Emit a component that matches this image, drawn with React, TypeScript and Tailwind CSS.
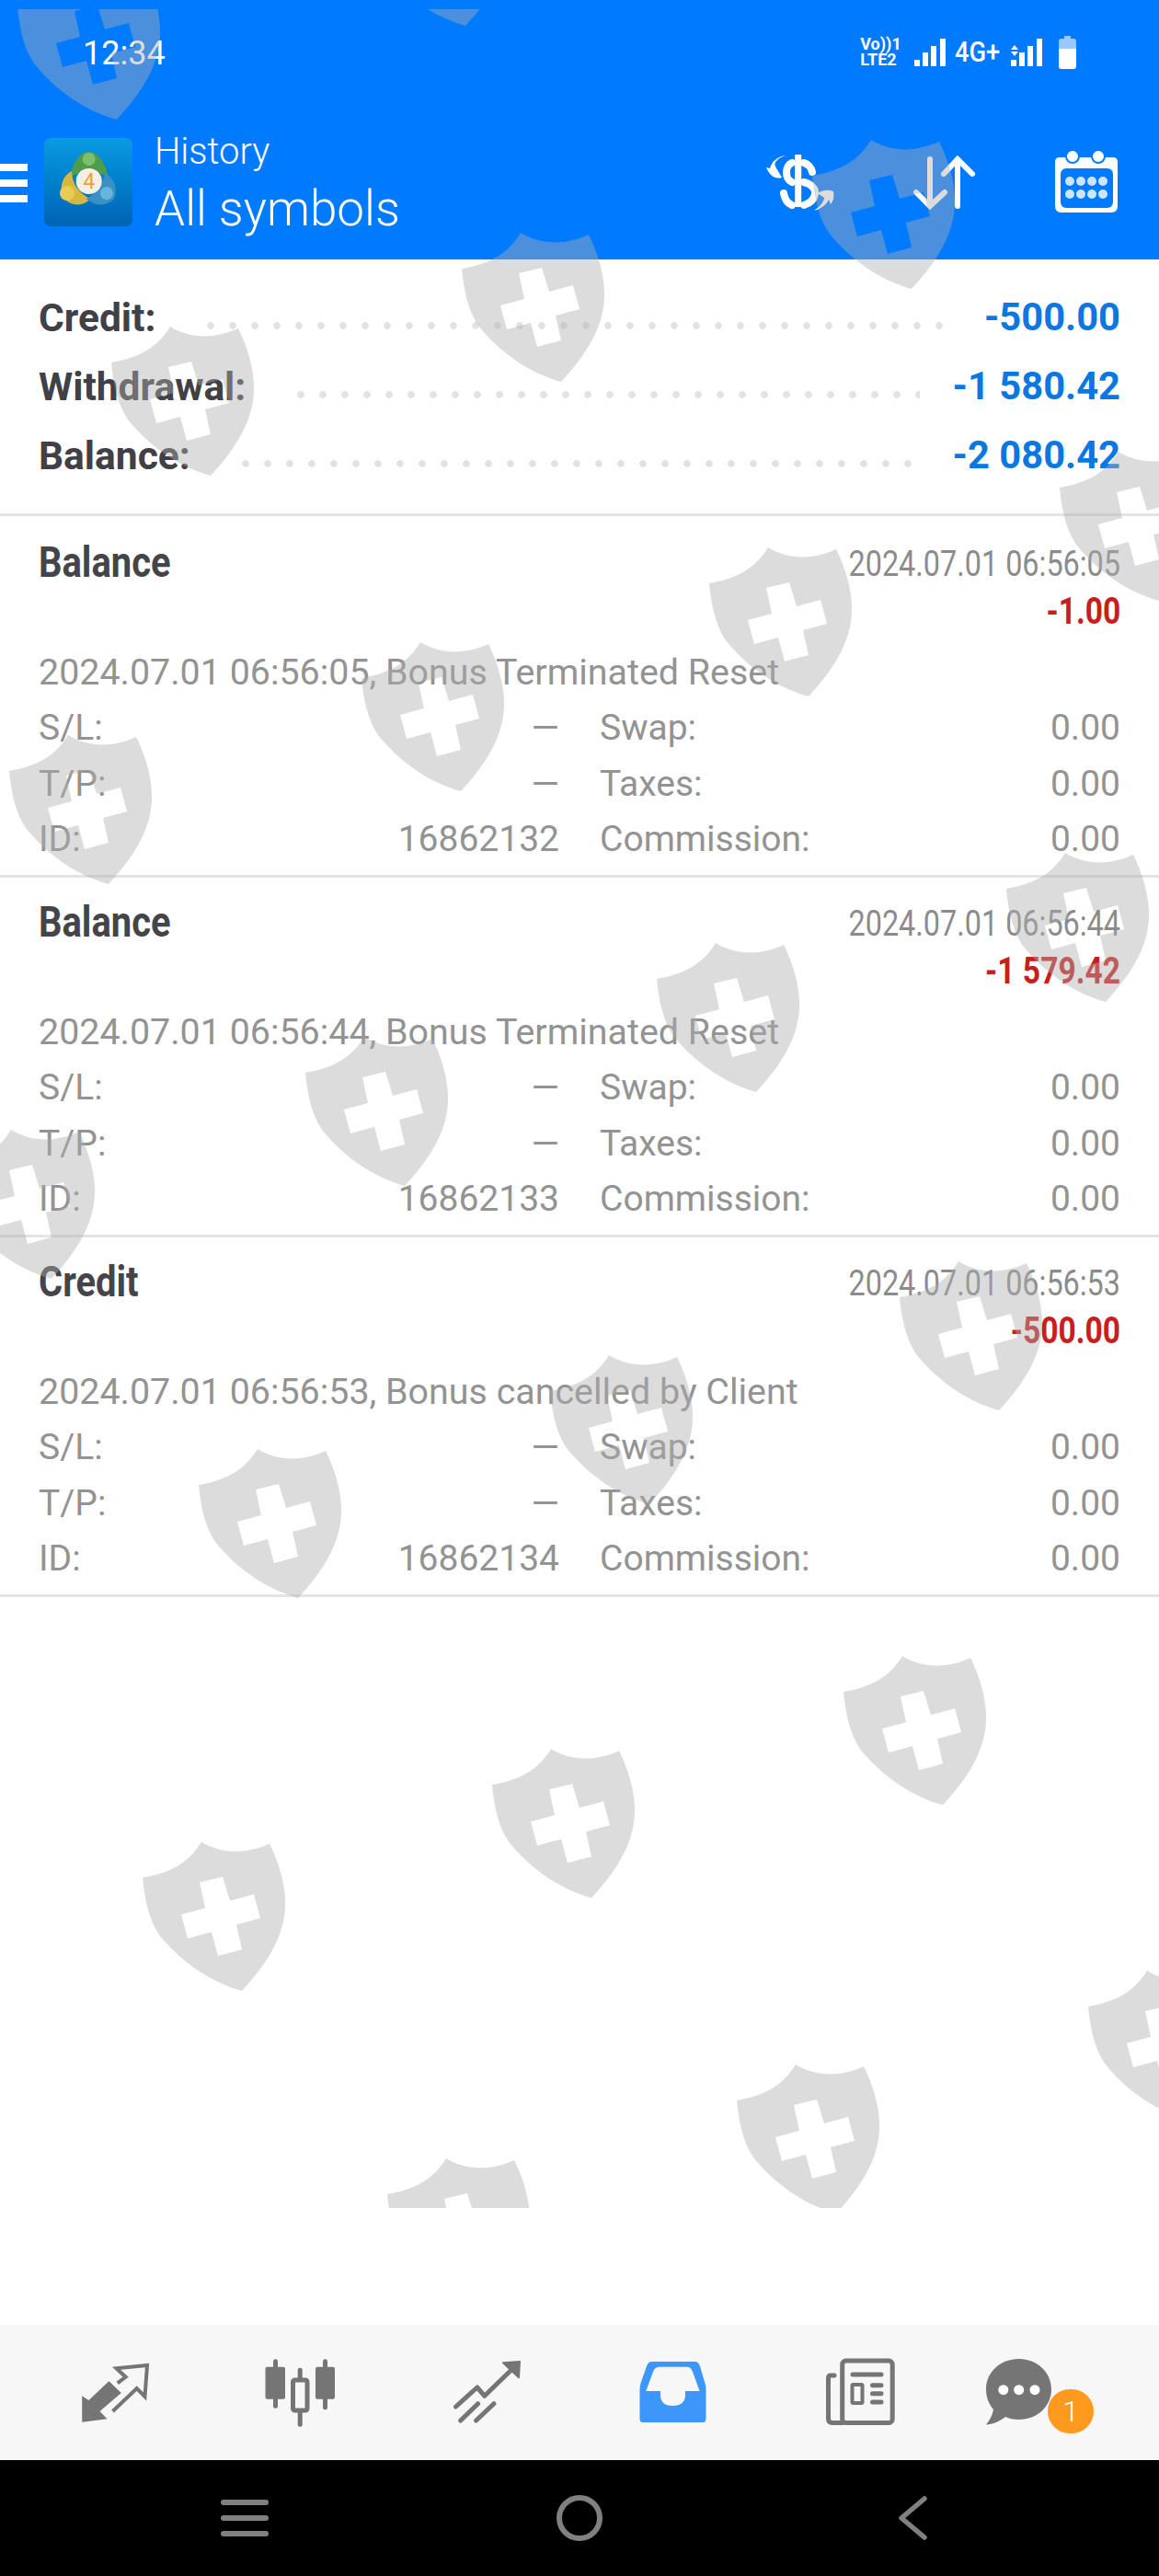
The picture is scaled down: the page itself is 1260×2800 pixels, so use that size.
import React from "react";

const SHIELDS: [number, number][] = [
  [19, -44], [398, -146], [883, 140], [502, 241], [121, 343], [1152, 479], [771, 583], [393, 686], [10, 787],
  [1094, 915], [714, 1013], [332, 1115], [-52, 1216], [978, 1359], [598, 1461], [216, 1563],
  [917, 1788], [535, 1889], [155, 1990], [1183, 2130], [801, 2232], [421, 2334],
];

function Shield({ x, y }: { x: number; y: number }) {
  return (
    <svg className="absolute" width="156" height="166" viewBox="0 0 156 166" style={{ left: x, top: y }}>
      <path
        fillRule="evenodd"
        fill="#adadad"
        fillOpacity="0.43"
        d="M64 2 C85 15 112 16 138 4 C148 24 156 50 155 72 C154 105 135 135 108 164 C75 155 42 133 18 103 C6 85 2 62 0 41 C30 36 50 25 64 2 Z M62 46 L87 40 L95 66 L121 59 L128 85 L102 92 L108 119 L82 126 L75 100 L49 107 L42 81 L68 74 Z"
      />
    </svg>
  );
}

function Row({ l, v, c, w }: { l: string; v: string; c: string; w: string }) {
  return (
    <div className="flex h-[60.5px] items-center px-[42px] text-[39px] text-[#939393]">
      <div className="flex w-[566px] justify-between">
        <span>{l}</span>
        <span>{v}</span>
      </div>
      <div className="ml-[44px] flex flex-1 justify-between">
        <span>{c}</span>
        <span>{w}</span>
      </div>
    </div>
  );
}

function Tx({ first, title, date, amount, color, comment, id }: { first?: boolean; title: string; date: string; amount: string; color: string; comment: string; id: string }) {
  return (
    <div className={first ? "h-[393px] border-b-[3px] border-[#e4e4e4] pt-[26px]" : "h-[391px] border-b-[3px] border-[#e4e4e4] pt-[24px]"}>
      <div className="flex justify-between px-[42px]">
        <span className="-mt-[2px] h-[52px] origin-left scale-x-[0.85] text-[47px] leading-[52px] font-bold text-[#444449]">{title}</span>
        <div className="flex flex-col items-end">
          <span className="origin-right scale-x-[0.83] text-[39px] leading-[52px] text-[#8b8b8b]">{date}</span>
          <span className={`origin-right scale-x-[0.84] text-[40px] leading-[52px] font-bold ${color}`}>{amount}</span>
        </div>
      </div>
      <div className="flex h-[60px] items-center px-[42px] pt-[20px] text-[39.4px] text-[#939393]">{comment}</div>
      <div className="mt-[10px]">
        <Row l="S/L:" v="—" c="Swap:" w="0.00" />
        <Row l="T/P:" v="—" c="Taxes:" w="0.00" />
        <Row l="ID:" v={id} c="Commission:" w="0.00" />
      </div>
    </div>
  );
}

function Sum({ l, v }: { l: string; v: string }) {
  return (
    <div className="flex h-[75px] items-center font-bold">
      <span className="text-[42.5px] text-[#404046]">{l}</span>
      <div className="mr-[36px] ml-[48px] h-[8px] flex-1 translate-y-[8px] bg-[radial-gradient(circle,#e2e2e2_3.5px,transparent_4px)] bg-[length:24px_8px] bg-repeat-x" />
      <span className="text-[41.7px] text-[#0a78e0]">{v}</span>
    </div>
  );
}

const G = "#757575";

export default function App() {
  return (
    <div className="relative h-[2800px] w-[1260px] overflow-hidden bg-white font-['Roboto',sans-serif]">
      {/* Blue top area */}
      <div className="h-[282px] bg-[#007aff] text-white">
        <div className="relative flex h-[114px] items-start justify-between">
          <span className="mt-[37px] ml-[90px] text-[36px] leading-[42px]">12:34</span>
          <div className="mt-[39px] mr-[90px] flex items-start">
            <div className="flex w-[42px] flex-col text-[18px] leading-[17px] font-bold whitespace-nowrap">
              <span>Vo))1</span>
              <span>LTE2</span>
            </div>
            <svg className="mt-[3px] ml-[17px]" width="36" height="30" viewBox="0 0 36 30" fill="#fff">
              <rect x="0" y="23" width="6" height="7" />
              <rect x="9" y="15" width="6" height="15" />
              <rect x="18" y="8" width="6" height="22" />
              <rect x="28" y="0" width="6" height="30" />
            </svg>
            <span className="mt-[2px] ml-[8px] origin-left scale-x-[0.85] text-[32px] leading-[30px] font-medium">4G+</span>
            <svg className="mt-[3px] ml-[2px]" width="38" height="30" viewBox="0 0 38 30" fill="#fff">
              <path d="M5 7 L9 12 H1Z M1 14 H9 L5 19Z" />
              <rect x="1" y="23" width="6" height="7" />
              <rect x="10" y="15" width="6" height="15" />
              <rect x="19" y="8" width="6" height="22" />
              <rect x="29" y="0" width="6" height="30" />
            </svg>
            <svg className="ml-[15px]" width="19" height="36" viewBox="0 0 19 36">
              <path fill="#9cc7ff" d="M6 0 H13 V3 H16 Q19 3 19 6 V15 H0 V6 Q0 3 3 3 H6Z" />
              <path fill="#fff" d="M0 14 H19 V33 Q19 36 16 36 H3 Q0 36 0 33Z" />
            </svg>
          </div>
        </div>
        <div className="flex h-[168px] items-start">
          <div className="mt-[64px] flex w-[30px] flex-col gap-[9px]">
            <div className="h-[8px] bg-white" />
            <div className="h-[8px] bg-white" />
            <div className="h-[8px] bg-white" />
          </div>
          <div className="mt-[36px] ml-[18px] h-[96px] w-[96px] overflow-hidden rounded-[7px] bg-gradient-to-b from-[#0a9be2] to-[#0063b4]">
            <svg width="96" height="96" viewBox="0 0 96 96">
              <path d="M48.7 15 C58 15 68 28 69 42 C60 36 38 36 29 42 C30 28 39 15 48.7 15Z" fill="#4f9d4c" />
              <circle cx="48.7" cy="23" r="7" fill="#7cc06e" />
              <path d="M30 36 C18 42 16 58 22 66 C30 75 44 74 50 66 C38 60 30 50 30 36Z" fill="#d6b93c" />
              <circle cx="25" cy="60" r="8" fill="#e8cc55" />
              <path d="M66 38 C78 44 80 58 76 66 C68 75 54 74 46 66 C58 60 64 50 66 38Z" fill="#3a8fc4" />
              <circle cx="68" cy="60" r="7" fill="#66b6dc" />
              <circle cx="48.7" cy="47" r="14" fill="#f5efe6" />
              <text x="48.7" y="55" textAnchor="middle" fontSize="23" fill="#f0a040" fontFamily="Roboto">4</text>
            </svg>
          </div>
          <div className="mt-[25px] ml-[24px] flex w-[300px] flex-col">
            <span className="text-[40px] leading-[52px] font-light">History</span>
            <span className="mt-[2px] text-[53px] leading-[68px] font-light">All symbols</span>
          </div>
          <svg className="mt-[51px] ml-[362px]" width="80" height="66" viewBox="0 0 80 66" fill="none" stroke="#fff">
            <path d="M37.7 3 V60" strokeWidth="7" />
            <path d="M31 12 C23 15 23 30 31 33 M44 12 C48 13 52 17 53 22 M44 33 C52 35 57 40 56 46 C55 52 50 56 44 58 M31 58 C26 56 23 51 22 45" strokeWidth="8" strokeLinecap="round" />
            <path d="M24 4 C15 7 11 12 13 16 L20 28 C12 30 7 26 3 17 L7 18 C9 10 16 5 24 4Z" fill="#fff" stroke="none" />
            <path d="M55 64 C64 58 66 52 66 50 L59 45 C64 41 72 41 76 43 C77 50 76 53 73 57 L71 52 C68 58 62 62 55 64Z" fill="#fff" stroke="none" />
          </svg>
          <svg className="mt-[51px] ml-[80px]" width="74" height="66" viewBox="0 0 74 66" fill="none" stroke="#fff" strokeWidth="6" strokeLinecap="round">
            <path d="M21 8 V59 M6 44 L21 59 L37 44" />
            <path d="M51 59 V8 M36 24 L51 8 L67 24" />
          </svg>
          <svg className="mt-[48px] ml-[82px]" width="70" height="70" viewBox="0 0 70 70">
            <path fill="#fff" d="M6 9 H64 Q69 9 69 14 V62 Q69 69 62 69 H8 Q1 69 1 62 V14 Q1 9 6 9Z" />
            <rect x="7" y="21" width="57" height="43" rx="6" fill="#007aff" />
            <circle cx="20" cy="8" r="7" fill="#fff" stroke="#007aff" strokeWidth="2" />
            <circle cx="48" cy="8" r="7" fill="#fff" stroke="#007aff" strokeWidth="2" />
            <g fill="#cfe4ff">
              <circle cx="17" cy="35" r="5" /><circle cx="29" cy="35" r="5" /><circle cx="41" cy="35" r="5" /><circle cx="53" cy="35" r="5" />
              <circle cx="17" cy="49" r="5" /><circle cx="29" cy="49" r="5" /><circle cx="41" cy="49" r="5" /><circle cx="53" cy="49" r="5" />
            </g>
          </svg>
        </div>
      </div>

      {/* Summary */}
      <div className="h-[279px] border-b-[3px] border-[#e4e4e4] px-[42px] pt-[26px]">
        <Sum l="Credit:" v="-500.00" />
        <Sum l="Withdrawal:" v="-1 580.42" />
        <Sum l="Balance:" v="-2 080.42" />
      </div>

      <Tx first title="Balance" date="2024.07.01 06:56:05" amount="-1.00" color="text-[#c81e1e]" comment="2024.07.01 06:56:05, Bonus Terminated Reset" id="16862132" />
      <Tx title="Balance" date="2024.07.01 06:56:44" amount="-1 579.42" color="text-[#c81e1e]" comment="2024.07.01 06:56:44, Bonus Terminated Reset" id="16862133" />
      <Tx title="Credit" date="2024.07.01 06:56:53" amount="-500.00" color="text-[#c81e1e]" comment="2024.07.01 06:56:53, Bonus cancelled by Client" id="16862134" />

      {/* Watermark overlay */}
      <div className="pointer-events-none absolute top-[10px] left-0 h-[2390px] w-[1260px] overflow-hidden">
        {SHIELDS.map(([x, y], i) => (
          <Shield key={i} x={x} y={y} />
        ))}
      </div>

      {/* Tab bar */}
      <div className="absolute bottom-[126px] left-0 flex h-[147px] w-[1260px] items-center bg-[#f7f7f7] pl-[85px]">
        <svg width="80" height="80" viewBox="0 0 80 80">
          <path fill={G} d="M4.2 71.7 V43.3 L11.4 48 L33.5 27.3 L46.8 40 L23.5 60 L31.5 68.3Z" />
          <path fill="none" stroke={G} strokeWidth="4" d="M37.5 60 L63.7 35 L72.5 44 L75 10 L41.5 13.3 L51.6 22.7 L42.8 29.3" />
        </svg>
        <svg className="ml-[121px]" width="80" height="80" viewBox="0 0 80 80" fill={G}>
          <rect x="2.5" y="11.7" width="21.5" height="35" rx="2" />
          <rect x="11" y="3.3" width="5" height="53.4" rx="2.5" />
          <rect x="57" y="11.7" width="21" height="35" rx="2" />
          <rect x="65" y="3.3" width="5" height="55" rx="2.5" />
          <rect x="37.7" y="12.7" width="5" height="64" rx="2.5" />
          <rect x="32.5" y="26" width="15.5" height="33" fill="#f7f7f7" stroke={G} strokeWidth="5" rx="2" />
        </svg>
        <svg className="ml-[122.5px]" width="80" height="80" viewBox="0 0 80 80" fill="none" stroke={G} strokeWidth="5" strokeLinecap="round" strokeLinejoin="round">
          <path d="M6.5 55 L29.8 34 L37.8 43.3 L72 10" />
          <path d="M11.7 70 L30.6 51.7 M28.6 70 L47.9 51.7" />
          <path d="M58 7.3 L76 6 L75 23.3Z" fill={G} strokeWidth="2" />
        </svg>
        <svg className="ml-[122.5px]" width="80" height="80" viewBox="0 0 80 80">
          <path fillRule="evenodd" fill="#3d97fb" d="M17 6 H65 Q68 6 70 11 L75 28 Q76.5 32 76.5 36 V68 Q76.5 72 73 72 H8 Q4.5 72 4.5 68 V36 Q4.5 32 6 28 L12 11 Q14 6 17 6Z M26 11.7 H56 Q60 11.7 62 17 L69.6 38 H54 V42 Q54 54 40 54 Q27 54 27 42 V38 H11.3 L19 17 Q21 11.7 26 11.7Z" />
        </svg>
        <svg className="ml-[124px]" width="80" height="80" viewBox="0 0 80 80" fill="none" stroke={G} strokeWidth="5" strokeLinecap="round">
          <rect x="20.7" y="5" width="54.5" height="67.5" rx="4" />
          <path d="M12 21 H8 Q5.5 21 5.5 24 V68 Q5.5 72.5 10 72.5 H21" />
          <path d="M32 20 H63 M53.5 31.7 H63 M53.5 40.7 H63 M53.5 50 H63" />
          <rect x="31.5" y="31" width="11" height="20" rx="1" strokeWidth="4" />
        </svg>
        <div className="relative ml-[92px] h-[80px] w-[80px]">
          <svg width="80" height="80" viewBox="0 0 80 80">
            <path fill={G} d="M40.7 3 C60 3 76 17 76 36 C76 55 60 69 40.7 69 C35 69 30 68 26 66 C20 71 12 74 5 74.5 C9 70 12 64 13 58 C8 52 5 45 5 36 C5 17 21 3 40.7 3Z" />
            <circle cx="23.8" cy="36.7" r="5.5" fill="#fff" />
            <circle cx="40.7" cy="36.7" r="5.5" fill="#fff" />
            <circle cx="58" cy="36.7" r="5.5" fill="#fff" />
          </svg>
          <div className="absolute top-[36px] left-[72px] flex h-[48px] w-[50px] items-center justify-center rounded-full bg-[#ff9a1e] text-[32px] font-light text-white">1</div>
        </div>
      </div>

      {/* Nav bar */}
      <div className="absolute bottom-0 left-0 flex h-[126px] w-[1260px] items-center bg-black pl-[240px]">
        <div className="flex w-[52px] flex-col gap-[11px]">
          <div className="h-[6px] rounded-full bg-[#808080]" />
          <div className="h-[6px] rounded-full bg-[#808080]" />
          <div className="h-[6px] rounded-full bg-[#808080]" />
        </div>
        <div className="ml-[313px] h-[50px] w-[50px] rounded-full border-[6px] border-[#808080]" />
        <svg className="ml-[322px]" width="32" height="48" viewBox="0 0 32 48" fill="none" stroke="#808080" strokeWidth="5.5" strokeLinecap="round" strokeLinejoin="round">
          <path d="M28 3 L3 24 L28 45" />
        </svg>
      </div>
    </div>
  );
}
